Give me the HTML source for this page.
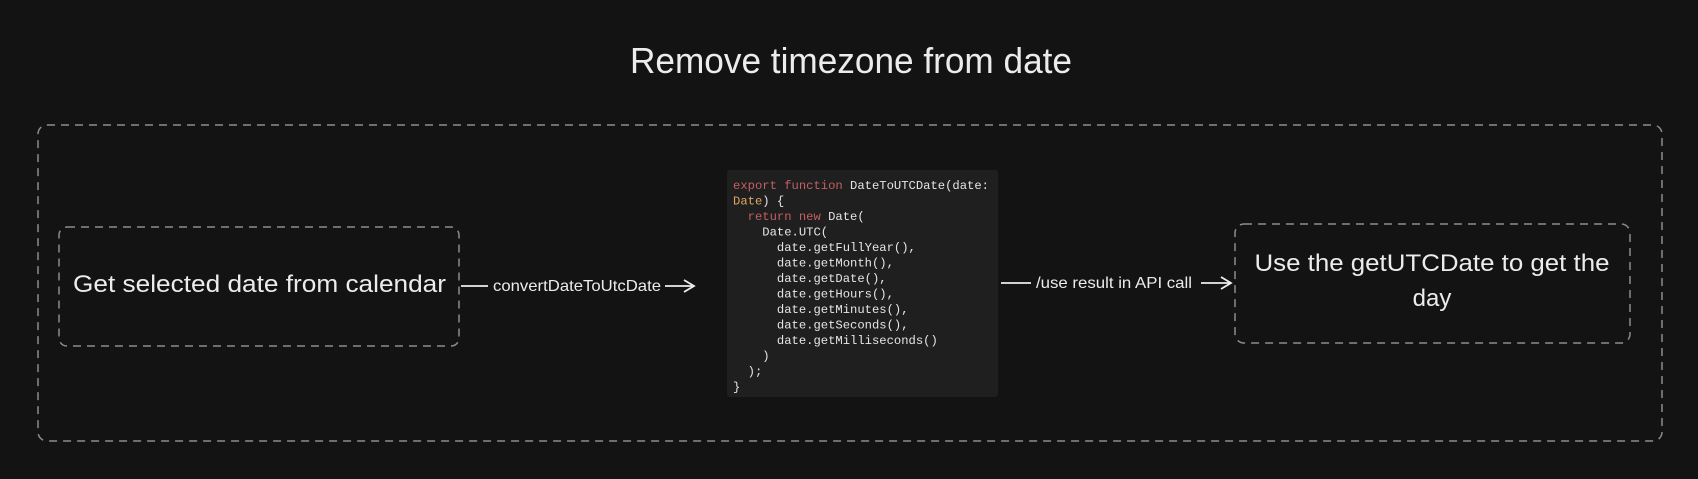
<!DOCTYPE html>
<html><head><meta charset="utf-8"><style>
html,body{margin:0;padding:0;background:#131313;}
body{width:1698px;height:474px;overflow:hidden;}
svg text{font-family:"Liberation Sans",sans-serif;fill:#ececec;}
svg .m text{font-family:"Liberation Mono",monospace;font-size:12.2px;fill:#e6e6e6;white-space:pre;}
svg .m .k{fill:#c45f60;}
svg .m .t{fill:#e2a766;}
</style></head><body>
<svg width="1698" height="474" viewBox="0 0 1698 474" xmlns="http://www.w3.org/2000/svg" xml:space="preserve">
<rect width="1698" height="474" fill="#131313"/>
<text x="851" y="73" font-size="36" text-anchor="middle" textLength="442" lengthAdjust="spacingAndGlyphs">Remove timezone from date</text>
<rect x="38" y="125" width="1624" height="316" rx="9" fill="none" stroke="#8c8c8c" stroke-width="1.5" stroke-dasharray="8,6"/>
<rect x="59" y="227" width="400" height="119" rx="8" fill="none" stroke="#8c8c8c" stroke-width="1.5" stroke-dasharray="8,6"/>
<text x="73" y="292" font-size="24" textLength="373" lengthAdjust="spacingAndGlyphs">Get selected date from calendar</text>
<line x1="461" y1="286" x2="488" y2="286" stroke="#eee" stroke-width="1.8"/>
<text x="493" y="291" font-size="16" textLength="168" lengthAdjust="spacingAndGlyphs">convertDateToUtcDate</text>
<line x1="665" y1="286" x2="693" y2="286" stroke="#eee" stroke-width="1.8"/>
<path d="M684 280 L694 286 L684 292" fill="none" stroke="#eee" stroke-width="1.8"/>
<rect x="727" y="170" width="271" height="227" rx="3" fill="#1f1f1f"/>
<g class="m">
<text x="733" y="189"><tspan class="k">export function</tspan> DateToUTCDate(date:</text>
<text x="733" y="204.5"><tspan class="t">Date</tspan>) {</text>
<text x="733" y="220">  <tspan class="k">return new</tspan> Date(</text>
<text x="733" y="235.5">    Date.UTC(</text>
<text x="733" y="251">      date.getFullYear(),</text>
<text x="733" y="266.5">      date.getMonth(),</text>
<text x="733" y="282">      date.getDate(),</text>
<text x="733" y="297.5">      date.getHours(),</text>
<text x="733" y="313">      date.getMinutes(),</text>
<text x="733" y="328.5">      date.getSeconds(),</text>
<text x="733" y="344">      date.getMilliseconds()</text>
<text x="733" y="359.5">    )</text>
<text x="733" y="375">  );</text>
<text x="733" y="390.5">}</text>
</g>
<line x1="1001" y1="283" x2="1031" y2="283" stroke="#eee" stroke-width="1.8"/>
<text x="1036" y="288" font-size="16" textLength="156" lengthAdjust="spacingAndGlyphs">/use result in API call</text>
<line x1="1201" y1="283" x2="1230" y2="283" stroke="#eee" stroke-width="1.8"/>
<path d="M1221 277 L1231 283 L1221 289" fill="none" stroke="#eee" stroke-width="1.8"/>
<rect x="1235" y="224" width="395" height="119" rx="9" fill="none" stroke="#8c8c8c" stroke-width="1.5" stroke-dasharray="8,6"/>
<text x="1432" y="271" font-size="24" text-anchor="middle" textLength="355" lengthAdjust="spacingAndGlyphs">Use the getUTCDate to get the</text>
<text x="1432" y="306" font-size="24" text-anchor="middle">day</text>
</svg>
</body></html>
